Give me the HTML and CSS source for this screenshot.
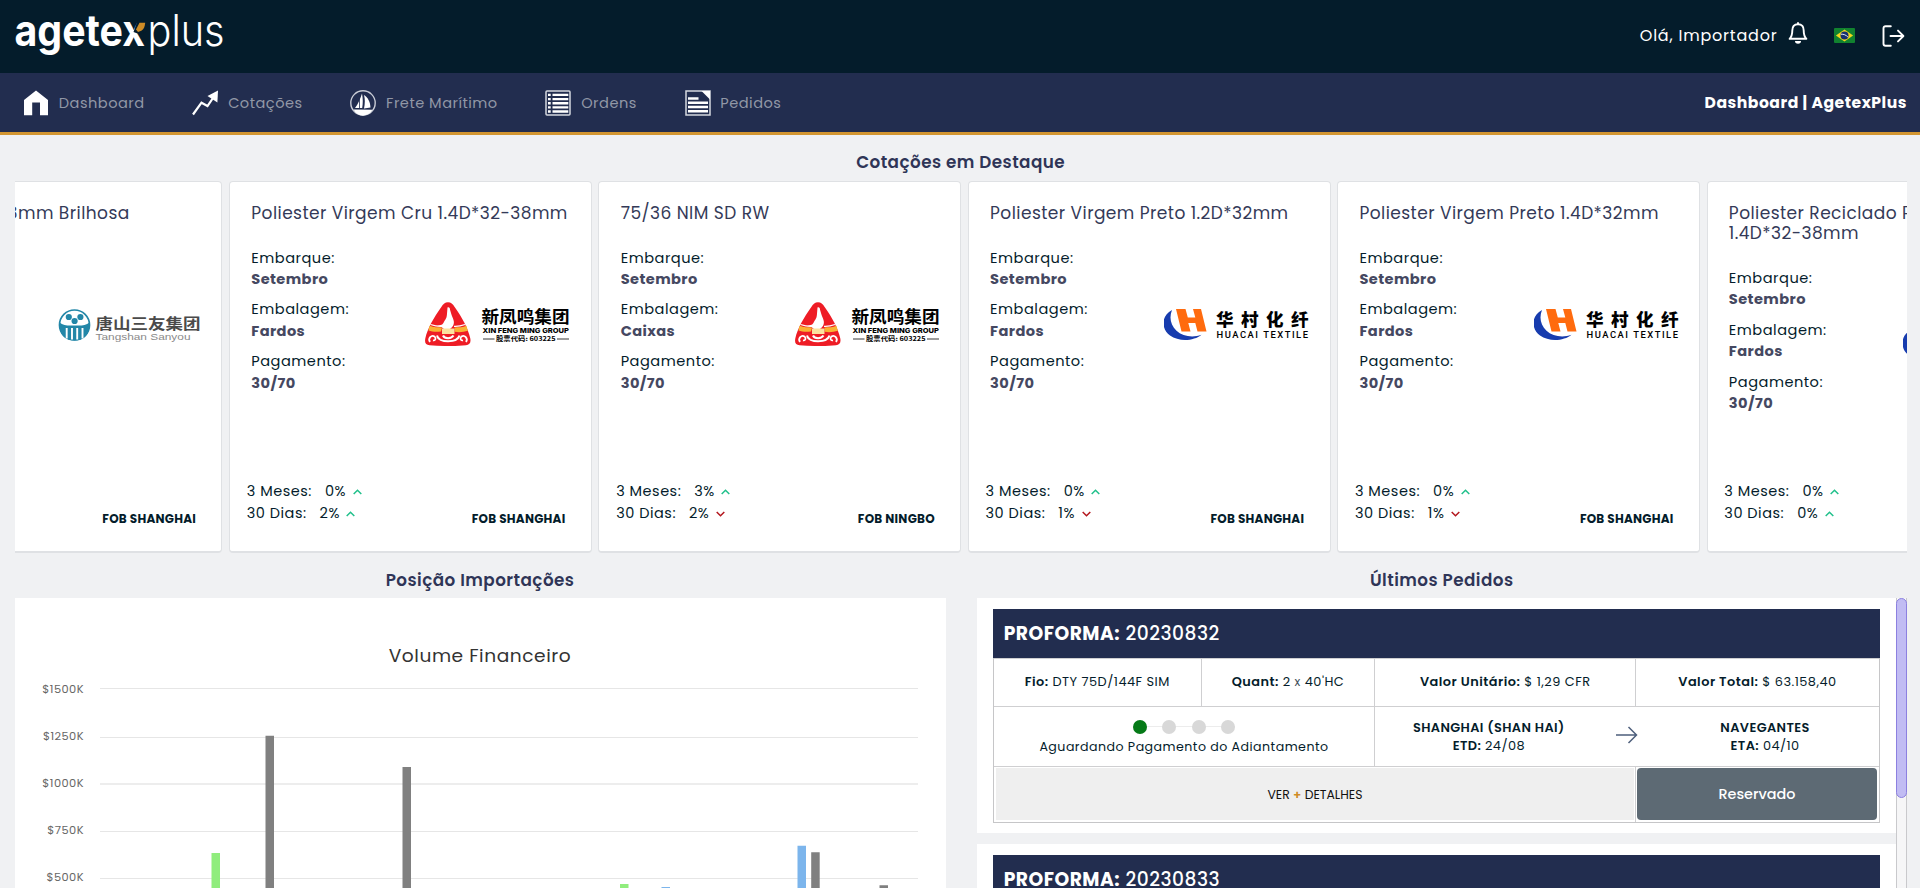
FILE: index.html
```
<!DOCTYPE html>
<html lang="pt-BR">
<head>
<meta charset="utf-8">
<title>Dashboard | AgetexPlus</title>
<link rel="stylesheet" href="styles.css">
</head>
<body>
<template id="logo-xfm">
  <svg class="supplier" viewBox="0 0 145 44">
    <path d="M23 .3c3 0 4.600 1.600 7 5.200C37 15.500 43 26 45.300 36.500c.8 4.500-.8 6.300-4.300 6.700-11 1.100-25 1.100-36.500 0C1 42.800-.6 41 .3 36.500 2.600 26 9 15.500 16 5.500 18.400 1.900 20 .3 23 .3z" fill="#ee1c25"/>
    <path d="M22.500 5.500c1.800-.6 2.600 1 2.600 2.500l1.500 5c1.500 4 3.200 6.500 1.800 10-.8 1.800-2 3-3.500 4h-6c-2-2.200-4.500-3.500-7.500-2.500 3.500-1.800 5.500-.8 7-3.500 1.200-3 3.500-4.500 3.500-8z" fill="#fff"/>
    <path d="M5.500 22.500c4 1.500 8.500 2 13 1.800M29 24.300c4 .2 7.500-.5 11-1.800" fill="none" stroke="#fff" stroke-width="1.300"/>
    <path d="M4.500 23.800c5 1.700 8 1.500 12.500 1.700l-1 4c-5 .8-9 .2-12.500-1zM29.500 25.500c4.500-.2 8 0 12-1.700l1.300 5c-4 1.200-8.500 1.800-13 1z" fill="#f9b233"/>
    <path d="M17 26.500h12.500v5.500H17z" fill="#fbe3a0"/>
    <path d="M5 40c-2.500-3.500 1.500-7.500 4.500-5.500 2 1.500.8 4.500-1.500 3.800M41 40c2.500-3.500-1.500-7.500-4.500-5.500-2 1.500-.8 4.500 1.500 3.800" fill="none" stroke="#fff" stroke-width="1.800"/>
    <path d="M12 33.500c1.500 7.500 20 8 22.500 0M18 33.500c1.500 3.500 8.500 3.500 10.500 0" fill="none" stroke="#fff" stroke-width="2"/>
    <text class="cjk" x="56.500" y="20.700" font-size="17.500" font-weight="700" textLength="88" lengthAdjust="spacingAndGlyphs">新凤鸣集团</text>
    <text class="lat" x="57.500" y="30.700" font-size="6.800" font-weight="800" textLength="86.500" lengthAdjust="spacingAndGlyphs">XIN FENG MING GROUP</text>
    <text class="cjk" x="71" y="39.300" font-size="6.300" font-weight="700" textLength="59.500" lengthAdjust="spacingAndGlyphs">股票代码: 603225</text>
    <path d="M58 37h11.500M132 37h12" stroke="#222" stroke-width=".9"/>
  </svg>
</template>
<template id="logo-tss">
  <svg class="supplier" viewBox="0 0 145 44">
    <circle cx="18.500" cy="23" r="15" fill="#fff" stroke="#2387a8" stroke-width="1.700"/>
    <circle cx="12.800" cy="15" r="3.100" fill="#2387a8"/><circle cx="24.400" cy="15" r="3.100" fill="#2387a8"/><circle cx="18.600" cy="19" r="3.100" fill="#2387a8"/>
    <path d="M3.500 20.500c4 3.500 8.500 3 15 3s11 .5 15-3c1 8-3 15.500-9.500 17.300-3.500 1-7.500 1-11 0C6.500 36 2.500 28.500 3.500 20.500z" fill="#2387a8"/>
    <path d="M10.700 26v10.500M16 26v11.500M21.200 26v11.500M26.500 26v10.500" stroke="#fff" stroke-width="1.900"/>
    <text class="cjk" x="39.500" y="26.900" font-size="14.800" font-weight="700" fill="#4a4a4a" textLength="105" lengthAdjust="spacingAndGlyphs">唐山三友集团</text>
    <text x="39.500" y="37.800" font-family="Liberation Sans, sans-serif" font-size="9.800" fill="#8a8a8a" textLength="95" lengthAdjust="spacingAndGlyphs">Tangshan Sanyou</text>
  </svg>
</template>
<template id="logo-hc">
  <svg class="supplier" viewBox="0 0 145 44">
    <path d="M8 8C-3.500 14-2.500 27.500 6 33.500c9 6.500 24 5.500 31.500-.8-8.500 3.300-19 1.800-25-4C6.500 23 5 15.500 8 8z" fill="#173cae"/>
    <path d="M12 7h9.500l2.300 8.500h7.500L29 7h8l5.500 22.500h-9l-2.200-8.500h-7l2.200 8.500h-9z" fill="#ff6b0e"/>
    <text class="cjk" x="52" y="24" font-size="17.500" font-weight="900" textLength="92.500">华村化纤</text>
    <text x="52.500" y="36.400" font-family="Roboto, sans-serif" font-size="9.400" font-weight="500" textLength="91.500">HUACAI TEXTILE</text>
  </svg>
</template>

<header class="topbar">
  <svg class="brand" width="212" height="60" viewBox="0 0 212 60">
    <text class="brand-text" x="-.5" y="45.700" font-size="43" font-weight="700" textLength="130.500" lengthAdjust="spacingAndGlyphs" fill="#fff">agetex</text>
    <path class="arm-gap" d="M118.500 32l4-11.500h9.500v11l-7 3z"/>
    <path d="M124.500 22.800h5.700l-.5 3c-.8 3.500-2.700 5-6.700 6.200l-2-2.500z" fill="#cf8c26"/>
    <text class="brand-text" x="132.500" y="45.700" font-size="43.500" font-weight="300" textLength="77" lengthAdjust="spacingAndGlyphs" fill="#fff">plus</text>
  </svg>
  <div class="user">
    <span class="hello">Olá, Importador</span>
    <svg class="bell" width="20" height="22" viewBox="0 0 20 22" fill="none" stroke="#fff" stroke-width="1.900" stroke-linejoin="round"><path d="M10 2.200c-4 0-5.700 2.600-5.700 6.200 0 4.300-1 6.600-2.700 8.400h16.800c-1.700-1.800-2.700-4.100-2.700-8.400 0-3.600-1.700-6.200-5.700-6.200z"/><path d="M10 .3v2"/><path d="M7 18.300h6a3 2.600 0 0 1-6 0z" fill="#fff" stroke="none" transform="translate(0 .8)"/></svg>
    <svg class="flag" width="21" height="15" viewBox="0 0 21 15"><rect width="21" height="15" rx="1" fill="#11822f"/><path d="M10.500 1.600l8.600 5.900-8.600 5.900L1.900 7.500z" fill="#f4d61c"/><circle cx="10.500" cy="7.500" r="4" fill="#15306e"/><path d="M6.900 6.200c2.700-.2 5.200.8 7 2.800" stroke="#e8eef5" stroke-width="1" fill="none"/></svg>
    <svg class="exit" width="23" height="22" viewBox="0 0 23 22" fill="none" stroke="#fff" stroke-width="1.900" stroke-linecap="round" stroke-linejoin="round"><path d="M8.800 1.200H3.500a2 2 0 0 0-2 2v15.500a2 2 0 0 0 2 2h5.300"/><path d="M8.500 11h12.800M16 5.600l5.400 5.400-5.400 5.400"/></svg>
  </div>
</header>

<nav class="menu">
  <a class="item"><svg width="26" height="26" viewBox="0 0 26 26"><path d="M13 .5L25 10v15.300h-8V12.500H9.200v12.800H1V10z" fill="#fff"/></svg><span>Dashboard</span></a>
  <a class="item"><svg width="26" height="26" viewBox="0 0 26 26"><path d="M1 24.500l8.500-11.800 6 3.300L21 8" fill="none" stroke="#fff" stroke-width="2.200"/><path d="M26 .5l-.6 12L15.500 6z" fill="#fff"/></svg><span>Cotações</span></a>
  <a class="item"><svg width="26" height="26" viewBox="0 0 26 26"><circle cx="13" cy="13" r="12.200" fill="none" stroke="#c9ccd6" stroke-width="1.400"/><path d="M12 3.500c1 5.500 1 9.500.2 14.500H5c3-4 5-8.500 7-14.500zM14 5c4 2.500 6.300 7 6.500 12.500L14 18.500C15 14 15.200 9 14 5zM3.500 19.500l19 .3C20.500 23.500 17 25.500 13 25.500S5.500 23.500 3.500 19.500z" fill="#fff"/><path d="M9.500 9v9" stroke="#222d4f" stroke-width=".8"/></svg><span>Frete Marítimo</span></a>
  <a class="item"><svg width="26" height="26" viewBox="0 0 26 26"><rect x="1" y="1" width="24" height="24" rx="1" fill="none" stroke="#d5d8df" stroke-width="1.500"/><path d="M3 4.900h2.700M3 9.100h2.700M3 13.200h2.700M3 17.400h2.700M3 21.500h2.700M7.500 4.900h15.800M7.500 9.100h15.800M7.500 13.200h15.800M7.500 17.400h15.800M7.500 21.500h15.800" stroke="#fff" stroke-width="2.400"/></svg><span>Ordens</span></a>
  <a class="item"><svg width="26" height="26" viewBox="0 0 26 26"><rect x="1" y="1" width="24" height="24" fill="none" stroke="#d5d8df" stroke-width="1.500"/><path d="M16.500 1H25v8.500z" fill="#fff"/><path d="M3 8.500h10.500M3 12.700h20M3 17h20M3 21.300h20" stroke="#fff" stroke-width="2.500"/></svg><span>Pedidos</span></a>
  <span class="crumb">Dashboard | AgetexPlus</span>
</nav>

<main>
  <h2>Cotações em Destaque</h2>
  <div class="carousel"><div class="track" id="track"></div></div>

  <div class="columns">
    <section class="imports">
      <h2>Posição Importações</h2>
      <svg class="chart" width="931" height="290" viewBox="0 0 931 290">
        <text class="chart-title" x="465" y="64">Volume Financeiro</text>
        <g stroke="#e6e6e6" stroke-width="1"><path d="M85 90.500h818M85 139.500h818M85 233.500h818M85 280.500h818"/><path d="M85 186h818" stroke="#ededed" stroke-width="2"/></g>
        <g class="axis"><text x="69" y="94.500">$1500K</text><text x="69" y="142.300">$1250K</text><text x="69" y="188.700">$1000K</text><text x="69" y="236.300">$750K</text><text x="69" y="283">$500K</text></g>
        <g fill="#90ed7d"><path d="M196.500 255h8.500v40h-8.500zM605 286h8.500v10H605z"/></g>
        <g fill="#7cb5ec"><path d="M646.500 289h8.500v9h-8.500zM782.500 247.700h8.500v50h-8.500z"/></g>
        <g fill="#808080"><path d="M250.500 137.700h8.500V290h-8.500zM387.500 169h8.500v130h-8.500zM796.200 254.200h8.500v60h-8.500zM864.500 287.200h8.500v9h-8.500z"/></g>
      </svg>
    </section>

    <section class="orders">
      <h2>Últimos Pedidos</h2>
      <div class="scroll">
        <div class="list">
          <article class="order">
            <div class="sheet">
              <div class="head"><b>PROFORMA:</b> 20230832</div>
              <div class="cell"><b>Fio:</b> DTY 75D/144F SIM</div>
              <div class="cell"><b>Quant:</b> 2 <i>x</i> 40'HC</div>
              <div class="cell"><b>Valor Unitário:</b> $ 1,29 CFR</div>
              <div class="cell total"><b>Valor Total:</b> $ 63.158,40</div>
              <div class="cell status">
                <div class="steps"><span class="dot on"></span><span class="dot"></span><span class="dot"></span><span class="dot"></span></div>
                <span class="status-text">Aguardando Pagamento do Adiantamento</span>
              </div>
              <div class="cell route">
                <div><b>SHANGHAI (SHAN HAI)</b><br><b>ETD:</b> 24/08</div>
                <svg width="22" height="18" viewBox="0 0 22 18" fill="none" stroke="#4d5f7c" stroke-width="1.500"><path d="M0 9h20.500M12.500 1l8 8-8 8"/></svg>
                <div><b>NAVEGANTES</b><br><b>ETA:</b> 04/10</div>
              </div>
              <div class="cell more"><button>VER <b>+</b> DETALHES</button></div>
              <div class="cell action"><button>Reservado</button></div>
            </div>
          </article>
          <article class="order"><div class="sheet"><div class="head"><b>PROFORMA:</b> 20230833</div></div></article>
        </div>
        <div class="bar"><div class="thumb"></div></div>
      </div>
    </section>
  </div>
</main>
<script src="app.js"></script>
</body>
</html>
```
FILE: styles.css
```
* { box-sizing: border-box; }
body { margin: 0; height: 888px; overflow: hidden; background: #f0f1f3; font-family: Poppins, Inter, "Noto Sans CJK SC", sans-serif; color: #041c2b; letter-spacing: .5px; }
svg { letter-spacing: 0; }
.cjk { font-family: "Noto Sans CJK SC", sans-serif; }
.lat { font-family: Inter, sans-serif; }
.brand-text { font-family: Inter, sans-serif; }

.topbar { height: 73px; padding: 0 15.500px 0 14.500px; background: #041c2b; display: flex; justify-content: space-between; align-items: flex-start; }
.brand { overflow: visible; }
.arm-gap { fill: #041c2b; }
.user { display: flex; align-items: center; height: 71px; color: #fff; }
.hello { font-size: 16px; letter-spacing: .79px; margin: -1px 10px 0 0; }
.bell { margin: -5px 26px 0 0; }
.flag { margin-right: 27px; }

.menu { height: 62px; padding: 0 13px 0 23px; background: #222d4f; border-bottom: 3px solid #d39631; display: flex; align-items: center; gap: 48.200px; }
.item { display: flex; align-items: center; gap: 9.800px; color: #9197a6; font-size: 14.600px; letter-spacing: .480px; }
.item span { margin: 1px -.5px 0 0; }
.crumb { margin-left: auto; color: #fff; font-weight: 700; font-size: 15.600px; letter-spacing: .520px; }

main { padding: 0 13.300px 0 14.600px; }
h2 { margin: 0; padding-top: 9px; height: 45.500px; line-height: 36.500px; text-align: center; font-size: 16.800px; font-weight: 600; letter-spacing: .450px; color: #2f3557; }

.carousel { overflow: hidden; height: 372px; }
.track { display: flex; gap: 6.600px; margin-left: -155px; }
.card { flex: 0 0 362.800px; height: 372px; display: flex; flex-direction: column; background: #fff; border: 1px solid #dfe1e4; border-bottom-width: 2px; border-radius: 4px; padding: 21px 20.300px 23px 16.800px; }
.card h3 { margin: 0 0 24.900px; padding-left: 4.500px; white-space: pre; font-size: 17px; font-weight: 400; line-height: 20.200px; letter-spacing: .440px; color: #343a58; }
.body { display: flex; justify-content: space-between; padding-left: 4.500px; }
.info { display: grid; gap: 8.700px; font-size: 14.600px; line-height: 21.600px; }
.info b { display: block; font-weight: 700; letter-spacing: .4px; color: #454861; }
.supplier { margin: 54.500px 0 0; width: 145px; height: 44px; }
.foot { margin-top: auto; display: flex; justify-content: space-between; align-items: flex-end; padding-right: 5px; }
.stats { font-size: 14.500px; line-height: 21.600px; padding-bottom: 3px; }
.stats div { display: flex; align-items: center; }
.stats em { font-style: normal; margin: 0 6.500px 0 13px; }
.fob { font-weight: 700; font-size: 12px; line-height: 18px; letter-spacing: .250px; white-space: nowrap; }

.columns { display: grid; grid-template-columns: 931px 930px; justify-content: space-between; }
.chart { display: block; background: #fff; }
.chart-title { font-size: 18.600px; font-weight: 400; letter-spacing: .550px; text-anchor: middle; fill: #333; }
.axis { font-size: 11.400px; letter-spacing: .450px; text-anchor: end; fill: #666; }

.scroll { display: flex; height: 290px; overflow: hidden; }
.list { flex: 1; }
.bar { width: 11px; border: 1px solid #c9c9cc; border-width: 0 1px; background: #f6f6f7; height: 400px; }
.thumb { width: 11px; height: 200px; margin-left: -1px; border-radius: 5.500px; background: #c1bcf3; border: 1px solid #8c80e0; }
.order { background: #fff; padding: 11px 16px 10px 16px; margin-bottom: 11px; }
.sheet { display: grid; grid-template-columns: 208px 173.500px 261px 1fr; grid-template-rows: 49px; border: 1px solid #c6c6c8; font-size: 12.900px; letter-spacing: .480px; }
.order:first-child .sheet { grid-template-rows: 48px 48px 60px 56px; }
.head { grid-column: 1 / 5; background: #222d4f; color: #fff; padding-left: 11px; font-size: 18.700px; font-weight: 500; line-height: 50.500px; height: 49px; margin: -1px -1px 0; letter-spacing: .5px; }
.head b { font-weight: 700; }
.cell { display: flex; align-items: center; justify-content: center; white-space: pre; border-right: 1px solid #cfcfd1; border-top: 1px solid #cfcfd1; padding-bottom: 1px; }
.cell b { font-weight: 600; }
.cell i { font-style: normal; font-size: 12px; color: #3f4f5b; }
.total, .route, .action { border-right: 0; }
.status { grid-column: 1 / 3; flex-direction: column; padding: 1px 0 0; }
.steps { display: flex; align-items: center; height: 14px; margin-top: 1px; background: linear-gradient(#ececec, #ececec) center / 100% 1px no-repeat; }
.dot { width: 14px; height: 14px; border-radius: 50%; background: #d8d8d8; }
.dot.on { background: #057a17; }
.dot + .dot { margin-left: 15.300px; }
.status-text { font-size: 12.600px; letter-spacing: .470px; line-height: 18px; margin-top: 4px; }
.route { grid-column: 3 / 5; display: grid; grid-template-columns: 1fr 49px 1fr; justify-items: center; text-align: center; line-height: 18.500px; letter-spacing: .4px; white-space: normal; padding: 1.500px 0 0; }
.route svg { margin-top: -5px; }
.more { grid-column: 1 / 4; padding: 1px 1px 2px 2px; }
.action { padding: 1px 2px 2px 1px; }
.cell button { width: 100%; height: 100%; border: 0; padding: 1px 0 0; font-family: inherit; letter-spacing: 0; }
.more button { background: #efefef; font-size: 12.400px; color: #111; }
.more button b { color: #cf8c26; }
.action button { background: #5d6a74; color: #fff; border-radius: 4px; font-size: 14.400px; font-weight: 500; }
```
FILE: app.js
```
const quotes = [
  { name: "Viscose 1.2D*38mm Brilhosa", pack: "Fardos", q: [0, 1], m: [0, 1], port: "SHANGHAI", logo: "tss" },
  { name: "Poliester Virgem Cru 1.4D*32-38mm", pack: "Fardos", q: [0, 1], m: [2, 1], port: "SHANGHAI", logo: "xfm" },
  { name: "75/36 NIM SD RW", pack: "Caixas", q: [3, 1], m: [2, 0], port: "NINGBO", logo: "xfm" },
  { name: "Poliester Virgem Preto 1.2D*32mm", pack: "Fardos", q: [0, 1], m: [1, 0], port: "SHANGHAI", logo: "hc" },
  { name: "Poliester Virgem Preto 1.4D*32mm", pack: "Fardos", q: [0, 1], m: [1, 0], port: "SHANGHAI", logo: "hc" },
  { name: "Poliester Reciclado Preto\n1.4D*32-38mm", pack: "Fardos", q: [0, 1], m: [0, 1], port: "SHANGHAI", logo: "hc" }
];
const arrow = up => `<svg width="9" height="6" viewBox="0 0 9 6" fill="none" stroke="${up ? "#21c08b" : "#b3161d"}" stroke-width="1.5"><path d="${up ? "M.7 5l3.800-3.800L8.300 5" : "M.7 1l3.800 3.800L8.300 1"}"/></svg>`;
const stat = (label, [value, up]) => `<div>${label}:<em>${value}%</em>${arrow(up)}</div>`;
const logo = id => document.getElementById("logo-" + id).innerHTML;
document.getElementById("track").innerHTML = quotes.map(c => `
  <article class="card">
    <h3>${c.name}</h3>
    <div class="body">
      <div class="info">
        <div>Embarque:<b>Setembro</b></div>
        <div>Embalagem:<b>${c.pack}</b></div>
        <div>Pagamento:<b>30/70</b></div>
      </div>
      ${logo(c.logo)}
    </div>
    <div class="foot">
      <div class="stats">${stat("3 Meses", c.q)}${stat("30 Dias", c.m)}</div>
      <span class="fob">FOB ${c.port}</span>
    </div>
  </article>`).join("");
```
